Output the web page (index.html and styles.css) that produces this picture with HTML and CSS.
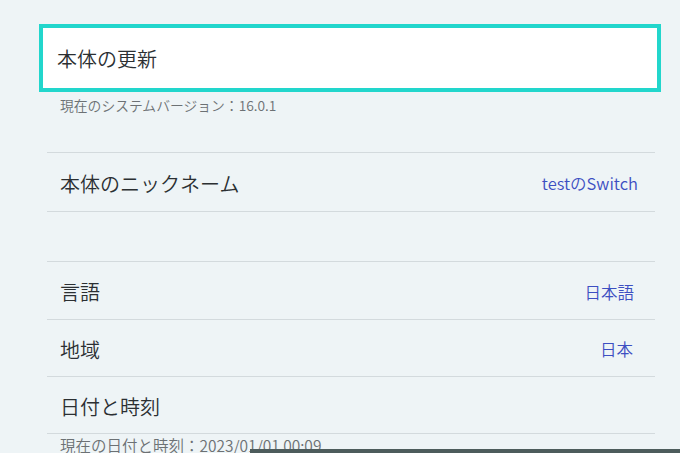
FILE: index.html
```html
<!DOCTYPE html>
<html lang="ja">
    <head>
        <meta charset="UTF-8">
        <meta name="viewport" content="width=device-width, initial-scale=1.0">
        <title>本体設定</title>
        <link rel="stylesheet" href="styles.css">
    </head>
 <body>
     <div class="page">
         <div class="update">本体の更新</div>
         <div class="note">現在のシステムバージョン：16.0.1</div>

         <div class="list">
             <div class="row first">
                 <span>本体のニックネーム</span>
                 <span class="value">testのSwitch</span>
             </div>
             <div class="spacer"></div>
             <div class="row second">
                 <span>言語</span>
                 <span class="value">日本語</span>
             </div>
             <div class="row">
                 <span>地域</span>
                 <span class="value">日本</span>
             </div>
             <div class="row">
                 <span>日付と時刻</span>
             </div>
             <div class="note date">現在の日付と時刻：2023/01/01 00:09</div>
         </div>
     </div>
     <div class="edge"></div>
 </body>
 </html>
```
FILE: styles.css
```css
body {
    margin: 0;
    font-family: "Noto Sans CJK JP", "Noto Sans", sans-serif;
    font-weight: 350;
    background-color: #eef4f6;
    color: #2b2f32;
    height: 453px;
    overflow: hidden;
    position: relative;
}
.page {
    padding: 24px 19px 0 39px;
}
.update {
    height: 68px;
    box-sizing: border-box;
    border: 4px solid #22d6cc;
    background-color: #fff;
    display: flex;
    align-items: center;
    padding-left: 14px;
    font-size: 20px;
}
.note {
    padding: 4px 0 0 21px;
    font-size: 13.8px;
    line-height: 19px;
    color: #6c7174;
}
.list {
    margin: 37px 6px 0 8px;
}
.row {
    height: 57px;
    box-sizing: border-box;
    border-top: 1px solid #d3dadd;
    display: flex;
    align-items: center;
    justify-content: space-between;
    padding: 2px 22px 0 13px;
    font-size: 20px;
}
.row.first {
    height: 59px;
    padding-right: 17px;
}
.row.second {
    height: 58px;
    padding-right: 21px;
}
.value {
    font-size: 16.5px;
    color: #3d4fc2;
}
.spacer {
    height: 49px;
    border-top: 1px solid #d3dadd;
}
.note.date {
    border-top: 1px solid #d3dadd;
    padding: 2px 0 0 13px;
    font-size: 15.5px;
}
.edge {
    position: absolute;
    left: 250px;
    right: 0;
    bottom: 0;
    height: 4px;
    background-color: #4d5c5c;
}
```
